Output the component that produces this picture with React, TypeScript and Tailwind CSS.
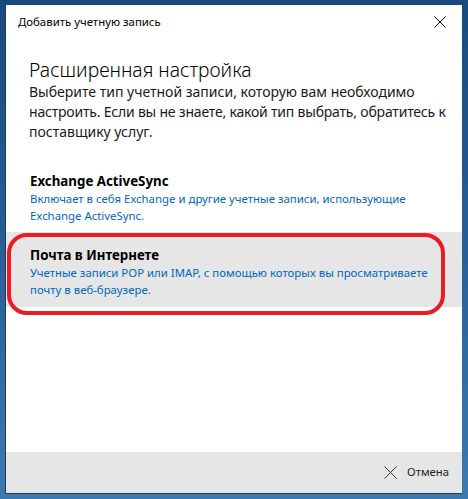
const font = { fontFamily: '"Noto Sans", "Open Sans", sans-serif' };

const AccountOption = ({
  title,
  lines,
  selected,
}: {
  title: string;
  lines: string[];
  selected?: boolean;
}) => {
  return (
    <div className={selected ? "relative bg-[#e6e6e6] pl-[24px] pt-[14px] pb-[9px]" : "relative pl-[24px] pt-[14px] pb-[8px]"}>
      <div className="text-[13.3px] font-bold leading-[18px] text-black">{title}</div>
      <div className="whitespace-nowrap text-[11.4px] leading-[17px] text-[#0067c0]">
        {lines.map((l) => (
          <div key={l}>{l}</div>
        ))}
      </div>
      {selected && (
        <div className="absolute left-[1px] top-[1px] h-[82px] w-[438px] rounded-[20px] border-[4px] border-[#ec1c24]" />
      )}
    </div>
  );
};

export default function App() {
  return (
    <div className="h-[499px] w-[468px] bg-gradient-to-b from-[#184a80] via-[#275f97] to-[#3d7ab2] pl-[5px] pt-[5px]" style={font}>
      <div className="flex h-[489px] w-[457px] flex-col border-b-[1px] border-l-[1px] border-[#253a52] bg-white">
        <div className="flex h-[34px] items-center justify-between pl-[12px] pr-[16px]">
          <span className="text-[11.4px] text-black">Добавить учетную запись</span>
          <svg width="12" height="12" viewBox="0 0 12 12" className="shrink-0 text-black">
            <path d="M0.5 0.5 L11.5 11.5 M11.5 0.5 L0.5 11.5" stroke="currentColor" strokeWidth="1" />
          </svg>
        </div>
        <div className="pl-[23px] pt-[18px]">
          <h1 className="text-[19.3px] font-light leading-[26px] text-black">Расширенная настройка</h1>
          <p className="-mt-[1px] whitespace-nowrap text-[14px] leading-[20px] text-[#1a1a1a]">
            Выберите тип учетной записи, которую вам необходимо
            <br />
            <span className="tracking-[-0.2px]">настроить. Если вы не знаете, какой тип выбрать, обратитесь к</span>
            <br />
            поставщику услуг.
          </p>
        </div>
        <div className="mt-[16px]">
          <AccountOption
            title="Exchange ActiveSync"
            lines={["Включает в себя Exchange и другие учетные записи, использующие", "Exchange ActiveSync."]}
          />
          <AccountOption
            title="Почта в Интернете"
            lines={["Учетные записи POP или IMAP, с помощью которых вы просматриваете", "почту в веб-браузере."]}
            selected
          />
        </div>
        <div className="mt-auto flex h-[41px] items-center justify-end gap-[10px] bg-[#e6e6e6] pr-[13px]">
          <svg width="13" height="13" viewBox="0 0 13 13" className="shrink-0 text-[#333]">
            <path d="M0.5 0.5 L12.5 12.5 M12.5 0.5 L0.5 12.5" stroke="currentColor" strokeWidth="1" />
          </svg>
          <span className="text-[11.3px] text-[#222]">Отмена</span>
        </div>
      </div>
    </div>
  );
}
